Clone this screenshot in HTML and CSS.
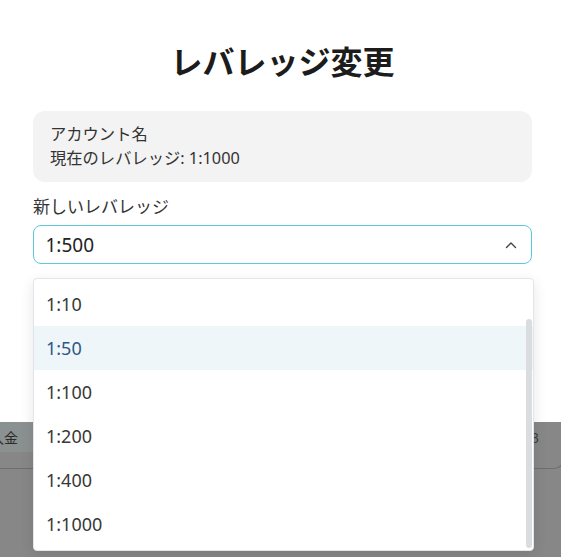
FILE: index.html
```html
<!DOCTYPE html>
<html lang="ja">
<head>
<meta charset="utf-8">
<title>レバレッジ変更</title>
<link rel="stylesheet" href="styles.css">
</head>
<body>
<div class="screen">
  <section class="modal">
    <h1 class="title">レバレッジ変更</h1>
    <div class="info">
      <div class="info-line">アカウント名</div>
      <div class="info-line">現在のレバレッジ: 1:1000</div>
    </div>
    <label class="field-label">新しいレバレッジ</label>
    <div class="select">
      <span class="select-value">1:500</span>
      <svg class="chevron" width="12" height="8" viewBox="0 0 12 8"><path d="M1.5 6.5 L6 2 L10.5 6.5" fill="none" stroke="#444" stroke-width="1.4" stroke-linecap="round" stroke-linejoin="round"/></svg>
    </div>
  </section>
  <section class="backdrop">
    <div class="bg-row">
      <span class="bg-tab"><span class="bg-tab-text">入金</span></span>
      <span class="bg-num">3</span>
    </div>
    <div class="bg-card"></div>
  </section>
  <ul class="dropdown">
    <li class="option">1:10</li>
    <li class="option active">1:50</li>
    <li class="option">1:100</li>
    <li class="option">1:200</li>
    <li class="option">1:400</li>
    <li class="option">1:1000</li>
    <div class="scroll-thumb"></div>
  </ul>
</div>
</body>
</html>
```
FILE: styles.css
```css
* { box-sizing: border-box; }
html, body { margin: 0; padding: 0; }
body {
  font-family: "Noto Sans", "Noto Sans CJK JP", sans-serif;
  color: #333;
  background: #878787;
}
.screen {
  position: relative;
  width: 561px;
  height: 557px;
  overflow: hidden;
}
.modal {
  background: #fff;
  height: 422px;
  padding: 42px 29px 0 33px;
  display: flex;
  flex-direction: column;
}
.title {
  margin: 0;
  font-size: 32px;
  line-height: 40px;
  font-weight: 700;
  color: #1c1c1c;
  text-align: center;
}
.info {
  margin-top: 29px;
  background: #f3f3f3;
  border-radius: 12px;
  padding: 11px 17px 12px;
  font-size: 16.3px;
  line-height: 24px;
  color: #333;
}
.field-label {
  margin-top: 13px;
  font-size: 17px;
  line-height: 24px;
  color: #333;
}
.select {
  margin-top: 6px;
  height: 39px;
  border: 1.5px solid #5ccadb;
  border-radius: 8px;
  display: flex;
  align-items: center;
  justify-content: space-between;
  padding: 0 14px 0 11.5px;
}
.select-value {
  font-size: 19px;
  color: #222;
}
.chevron { display: block; }
.backdrop {
  height: 135px;
  background: #878787;
}
.bg-row {
  height: 30px;
  display: flex;
  justify-content: space-between;
  align-items: center;
  font-size: 14px;
  color: #2b2b2b;
}
.bg-tab {
  width: 33px;
  height: 30px;
  background: #8b9090;
  display: flex;
  align-items: center;
  overflow: hidden;
}
.bg-tab-text {
  margin-left: -10px;
  white-space: nowrap;
}
.bg-num {
  padding-right: 22px;
  color: #3f3f3f;
}
.bg-card {
  height: 17px;
  margin-left: -20px;
  margin-right: -3px;
  border: 1px solid #6e6e6e;
  border-top: none;
  border-radius: 0 0 10px 0;
}
.dropdown {
  position: absolute;
  top: 278px;
  left: 33px;
  width: 501px;
  height: 273px;
  margin: 0;
  padding: 3px 0 4px;
  list-style: none;
  background: #fff;
  border: 1px solid #e3e5e8;
  border-radius: 4px;
  box-shadow: 0 4px 14px rgba(0, 0, 0, 0.10);
  overflow: hidden;
}
.option {
  height: 44px;
  display: flex;
  align-items: center;
  padding-left: 12px;
  padding-bottom: 1px;
  font-size: 18px;
  color: #383838;
}
.option.active {
  background: #eef6f9;
  color: #2f5687;
}
.scroll-thumb {
  position: absolute;
  left: 492px;
  top: 40px;
  width: 6px;
  height: 229px;
  border-radius: 3px;
  background: #dadcdf;
}
```
